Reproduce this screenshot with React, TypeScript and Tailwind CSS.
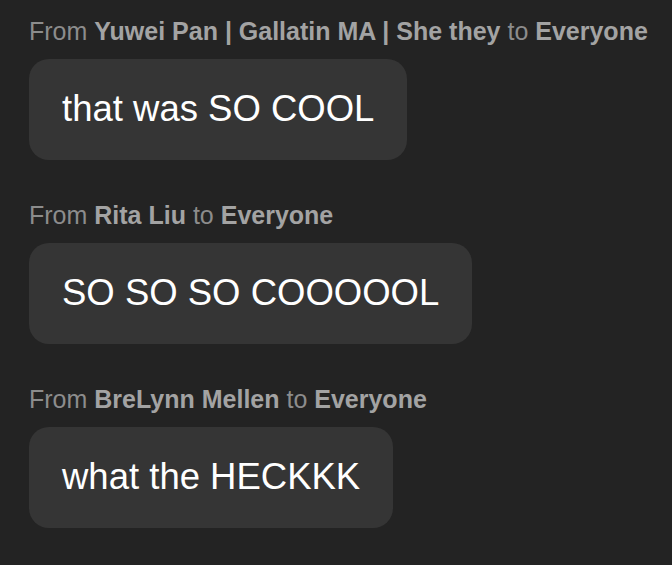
const messages = [
  { from: "Yuwei Pan | Gallatin MA | She they", text: "that was SO COOL" },
  { from: "Rita Liu", text: "SO SO SO COOOOOL" },
  { from: "BreLynn Mellen", text: "what the HECKKK" },
];

export default function App() {
  return (
    <div
      className="min-h-[565px] w-[672px] bg-[#232323] pl-[29px] pt-[17px]"
      style={{ fontFamily: '"Liberation Sans", Arial, sans-serif' }}
    >
      <div className="flex flex-col gap-[41px]">
        {messages.map((m) => (
          <div key={m.text} className="flex flex-col items-start">
            <div className="h-[28px] whitespace-nowrap text-[25px] leading-[28px] text-[#8c8c8c]">
              From <span className="font-bold text-[#a3a3a3]">{m.from}</span> to{" "}
              <span className="font-bold text-[#a3a3a3]">Everyone</span>
            </div>
            <div className="mt-[14px] flex h-[101px] items-center rounded-[20px] bg-[#353535] px-[33px] text-[36.5px] text-white">
              {m.text}
            </div>
          </div>
        ))}
      </div>
    </div>
  );
}
